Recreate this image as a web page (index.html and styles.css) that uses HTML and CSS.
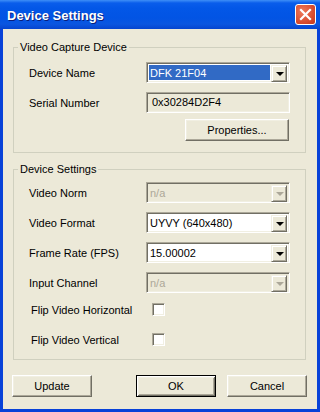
FILE: index.html
```html
<!DOCTYPE html>
<html lang="en">
<head>
  <meta charset="UTF-8" />
  <title>Device Settings</title>
  <link rel="stylesheet" href="styles.css">
</head>
<body>
  <div class="window">
    <div class="titlebar">
      <span class="title">Device Settings</span>
      <div class="close">
        <svg width="13" height="13" viewBox="0 0 13 13">
          <path d="M2 2 L11 11 M11 2 L2 11" stroke="#fff" stroke-width="2.2" stroke-linecap="square"/>
        </svg>
      </div>
    </div>

    <div class="client">
      <fieldset class="group group-capture">
        <legend>Video Capture Device</legend>
        <div class="row">
          <label>Device Name</label>
          <div class="combo">
            <span class="value selected">DFK 21F04</span>
            <div class="drop"><i class="arrow"></i></div>
          </div>
        </div>
        <div class="row">
          <label>Serial Number</label>
          <div class="edit">0x30284D2F4</div>
        </div>
        <div class="row row-button">
          <button class="btn btn-props">Properties...</button>
        </div>
      </fieldset>

      <fieldset class="group group-settings">
        <legend>Device Settings</legend>
        <div class="row">
          <label>Video Norm</label>
          <div class="combo disabled">
            <span class="value">n/a</span>
            <div class="drop"><i class="arrow"></i></div>
          </div>
        </div>
        <div class="row">
          <label>Video Format</label>
          <div class="combo">
            <span class="value">UYVY (640x480)</span>
            <div class="drop"><i class="arrow"></i></div>
          </div>
        </div>
        <div class="row">
          <label>Frame Rate (FPS)</label>
          <div class="combo">
            <span class="value">15.00002</span>
            <div class="drop"><i class="arrow"></i></div>
          </div>
        </div>
        <div class="row row-channel">
          <label>Input Channel</label>
          <div class="combo disabled">
            <span class="value">n/a</span>
            <div class="drop"><i class="arrow"></i></div>
          </div>
        </div>
        <div class="row row-check">
          <label>Flip Video Horizontal</label>
          <span class="check"></span>
        </div>
        <div class="row row-check">
          <label>Flip Video Vertical</label>
          <span class="check"></span>
        </div>
      </fieldset>

      <div class="buttons">
        <button class="btn">Update</button>
        <button class="btn btn-default">OK</button>
        <button class="btn">Cancel</button>
      </div>
    </div>
  </div>
</body>
</html>
```

FILE: styles.css
```css
html, body {
  margin: 0;
  padding: 0;
  background: #ECE9D8;
}

body {
  font-family: "Liberation Sans", Arial, sans-serif;
  font-size: 11px;
  color: #000;
}

.window {
  width: 320px;
  height: 412px;
  display: flex;
  flex-direction: column;
  background: #0842D8;
}

/* Title bar */
.titlebar {
  height: 29px;
  flex: none;
  display: flex;
  align-items: center;
  justify-content: space-between;
  padding: 0 4px 0 7px;
  background: linear-gradient(#3E8FF7 0, #0A5DEB 3px, #0357E7 8px, #0254E4 18px, #0B56E0 24px, #0645CF 29px);
}

.title {
  color: #fff;
  font-weight: bold;
  font-size: 13px;
  text-shadow: 1px 1px #0A1E7A;
  padding-top: 2px;
}

.close {
  width: 19px;
  height: 19px;
  border: 1px solid #fff;
  border-radius: 3px;
  background: radial-gradient(circle at 35% 35%, #EE7A5C, #D6472A 70%, #C23A1D);
  display: flex;
  align-items: center;
  justify-content: center;
}

/* Client area */
.client {
  flex: 1;
  margin: 0 3px 3px 3px;
  background: #ECE9D8;
  display: flex;
  flex-direction: column;
}

.group {
  margin: 0 11px 0 10px;
  padding: 0 0 0 15px;
  border: 1px solid #D0D0BF;
  border-radius: 0;
}

.group legend {
  padding: 0 2px;
  margin-left: -11px;
  line-height: 13px;
}

.group-capture {
  margin-top: 12px;
  padding-top: 8px;
  padding-bottom: 11px;
}

.group-settings {
  margin-top: 10px;
  padding-top: 6px;
  padding-bottom: 9px;
}

.row {
  display: flex;
  align-items: center;
  height: 21px;
  margin-bottom: 9px;
}

.row label {
  width: 117px;
  flex: none;
}

.row-button {
  justify-content: flex-end;
  padding-right: 16px;
  height: 22px;
  margin-top: -3px;
  margin-bottom: 0;
}

.row-channel {
  margin-bottom: 6px;
}

.group-settings .row:last-child {
  margin-bottom: 0;
}

.row-check label {
  width: 121px;
  padding-left: 2px;
}

/* Sunken controls */
.combo, .edit {
  width: 144px;
  height: 21px;
  box-sizing: border-box;
  border: 1px solid;
  border-color: #ACA899 #fff #fff #ACA899;
  box-shadow: inset 1px 1px #716F64, inset -1px -1px #F1EFE2;
  background: #fff;
}

.combo {
  display: flex;
  padding: 2px;
}

.combo .value {
  flex: 1;
  line-height: 17px;
  padding-left: 1px;
  white-space: nowrap;
}

.combo .value.selected {
  background: #316AC5;
  color: #fff;
  margin-right: 1px;
}

.drop {
  width: 16px;
  height: 17px;
  box-sizing: border-box;
  border: 1px solid;
  border-color: #F1EFE2 #716F64 #716F64 #F1EFE2;
  box-shadow: inset 1px 1px #fff, inset -1px -1px #ACA899;
  background: #ECE9D8;
  display: flex;
  align-items: center;
  justify-content: center;
}

.arrow {
  width: 0;
  height: 0;
  border-left: 4px solid transparent;
  border-right: 4px solid transparent;
  border-top: 4px solid #000;
  margin-left: 1px;
  margin-top: 1px;
}

.combo.disabled {
  background: #ECE9D8;
  color: #ACA899;
}

.combo.disabled .arrow {
  border-top-color: #ACA899;
}

.edit {
  background: #ECE9D8;
  line-height: 19px;
  padding-left: 5px;
}

.check {
  width: 13px;
  height: 13px;
  box-sizing: border-box;
  border: 1px solid;
  border-color: #ACA899 #fff #fff #ACA899;
  box-shadow: inset 1px 1px #716F64, inset -1px -1px #F1EFE2;
  background: #fff;
}

/* Push buttons */
.btn {
  font: inherit;
  color: #000;
  width: 80px;
  height: 22px;
  padding: 0;
  box-sizing: border-box;
  background: #ECE9D8;
  border: 1px solid;
  border-color: #fff #716F64 #716F64 #fff;
  box-shadow: inset -1px -1px #ACA899, inset 1px 1px #F1EFE2;
}

.btn-props {
  width: 104px;
}

.btn-default {
  border: 1px solid #000;
  box-shadow: inset 1px 1px #fff, inset -1px -1px #716F64, inset 2px 2px #F1EFE2, inset -2px -2px #ACA899;
}

.buttons {
  display: flex;
  margin: 15px 10px 0 9px;
}

.buttons .btn-default {
  margin-left: 44px;
}

.buttons .btn:last-child {
  margin-left: 11px;
}
```
